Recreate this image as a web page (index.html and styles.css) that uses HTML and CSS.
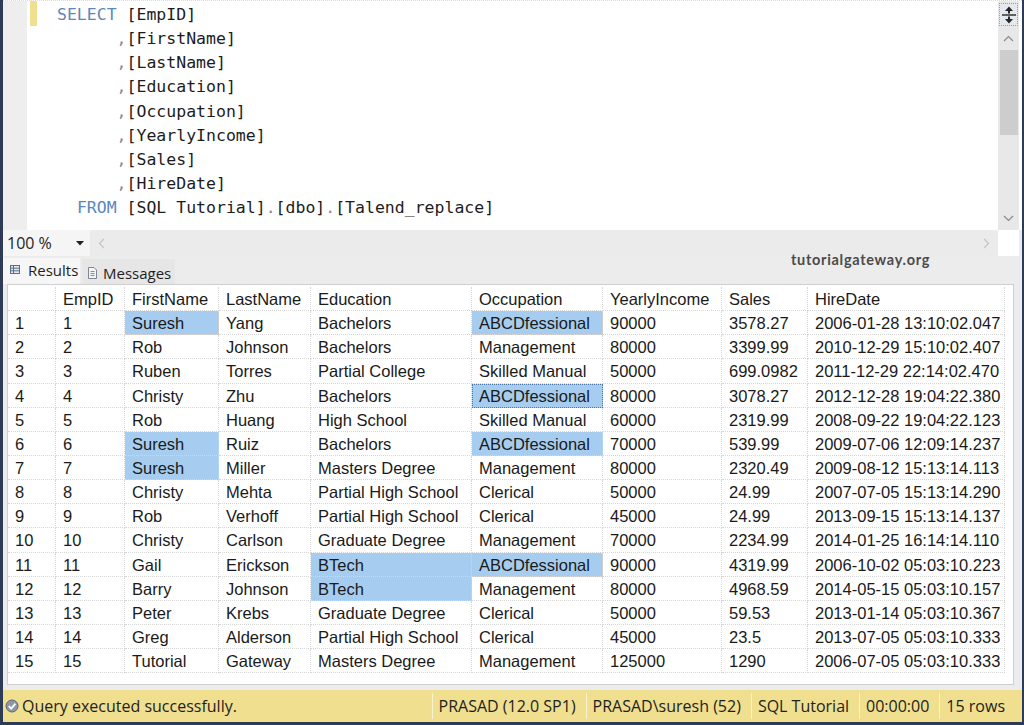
FILE: index.html
```html
<!DOCTYPE html>
<html>
<head>
<meta charset="utf-8">
<link rel="stylesheet" href="styles.css">
</head>
<body>
<div class="app">
  <div class="editor">
    <div class="gutter"></div>
    <div class="gap"></div>
    <div class="change"><div class="mark"></div></div>
    <div class="code">
      <div class="ln"><span class="kw">SELECT</span> [EmpID]</div>
      <div class="ln">      <span class="p">,</span>[FirstName]</div>
      <div class="ln">      <span class="p">,</span>[LastName]</div>
      <div class="ln">      <span class="p">,</span>[Education]</div>
      <div class="ln">      <span class="p">,</span>[Occupation]</div>
      <div class="ln">      <span class="p">,</span>[YearlyIncome]</div>
      <div class="ln">      <span class="p">,</span>[Sales]</div>
      <div class="ln">      <span class="p">,</span>[HireDate]</div>
      <div class="ln">  <span class="kw">FROM</span> [SQL Tutorial]<span class="p">.</span>[dbo]<span class="p">.</span>[Talend_replace]</div>
    </div>
    <div class="vscroll">
      <div class="split">
        <svg width="16" height="18" viewBox="0 0 16 18"><path d="M8 0.5 L4 5 H7 V7.6 H9 V5 H12Z M8 17.5 L4 13 H7 V10.4 H9 V13 H12Z" fill="#252525"/><rect x="1" y="8.3" width="14" height="1.4" fill="#252525"/></svg>
      </div>
      <div class="arrow"><svg width="11" height="7" viewBox="0 0 11 7"><path d="M1 6 L5.5 1.5 L10 6" stroke="#8a8a8a" fill="none" stroke-width="1.2"/></svg></div>
      <div class="thumb"></div>
      <div class="track"></div>
      <div class="arrow"><svg width="11" height="7" viewBox="0 0 11 7"><path d="M1 1 L5.5 5.5 L10 1" stroke="#8a8a8a" fill="none" stroke-width="1.2"/></svg></div>
    </div>
  </div>

  <div class="zoombar">
    <div class="zoom"><span>100 %</span><svg width="8" height="5" viewBox="0 0 8 5"><path d="M0 0 H8 L4 4.5Z" fill="#222"/></svg></div>
    <div class="hscroll">
      <svg width="7" height="11" viewBox="0 0 7 11"><path d="M6 1 L1.5 5.5 L6 10" stroke="#c4c4c4" fill="none" stroke-width="1.2"/></svg>
      <svg width="7" height="11" viewBox="0 0 7 11"><path d="M1 1 L5.5 5.5 L1 10" stroke="#c4c4c4" fill="none" stroke-width="1.2"/></svg>
    </div>
    <div class="corner"></div>
  </div>

  <div class="tabs">
    <div class="tab active">
      <svg width="10" height="9" viewBox="0 0 10 9"><rect x="0.5" y="0.5" width="9" height="8" fill="#e3e9f0" stroke="#5c6f86"/><path d="M0.5 3.2 H9.5 M0.5 5.8 H9.5 M3.5 0.5 V8.5" stroke="#5c6f86"/></svg>
      <span>Results</span>
    </div>
    <div class="tab">
      <svg width="11" height="12" viewBox="0 0 11 12"><path d="M1.5 0.5 H7 L9.5 3 V11.5 H1.5Z" fill="#f4f4f4" stroke="#7c8594"/><path d="M3.5 4.5 H7.5 M3.5 6.5 H7.5 M3.5 8.5 H7.5" stroke="#b08a3a"/></svg>
      <span>Messages</span>
    </div>
    <div class="watermark">tutorialgateway.org</div>
  </div>

  <div class="results">
    <div class="grid-wrap">
      <div class="grid">
        <div class="c"></div><div class="c">EmpID</div><div class="c">FirstName</div><div class="c">LastName</div><div class="c">Education</div><div class="c">Occupation</div><div class="c">YearlyIncome</div><div class="c">Sales</div><div class="c">HireDate</div>

        <div class="c">1</div><div class="c">1</div><div class="c sel">Suresh</div><div class="c">Yang</div><div class="c">Bachelors</div><div class="c sel">ABCDfessional</div><div class="c">90000</div><div class="c">3578.27</div><div class="c">2006-01-28 13:10:02.047</div>

        <div class="c">2</div><div class="c">2</div><div class="c">Rob</div><div class="c">Johnson</div><div class="c">Bachelors</div><div class="c">Management</div><div class="c">80000</div><div class="c">3399.99</div><div class="c">2010-12-29 15:10:02.407</div>

        <div class="c">3</div><div class="c">3</div><div class="c">Ruben</div><div class="c">Torres</div><div class="c">Partial College</div><div class="c">Skilled Manual</div><div class="c">50000</div><div class="c">699.0982</div><div class="c">2011-12-29 22:14:02.470</div>

        <div class="c">4</div><div class="c">4</div><div class="c">Christy</div><div class="c">Zhu</div><div class="c">Bachelors</div><div class="c sel focus">ABCDfessional</div><div class="c">80000</div><div class="c">3078.27</div><div class="c">2012-12-28 19:04:22.380</div>

        <div class="c">5</div><div class="c">5</div><div class="c">Rob</div><div class="c">Huang</div><div class="c">High School</div><div class="c">Skilled Manual</div><div class="c">60000</div><div class="c">2319.99</div><div class="c">2008-09-22 19:04:22.123</div>

        <div class="c">6</div><div class="c">6</div><div class="c sel">Suresh</div><div class="c">Ruiz</div><div class="c">Bachelors</div><div class="c sel">ABCDfessional</div><div class="c">70000</div><div class="c">539.99</div><div class="c">2009-07-06 12:09:14.237</div>

        <div class="c">7</div><div class="c">7</div><div class="c sel">Suresh</div><div class="c">Miller</div><div class="c">Masters Degree</div><div class="c">Management</div><div class="c">80000</div><div class="c">2320.49</div><div class="c">2009-08-12 15:13:14.113</div>

        <div class="c">8</div><div class="c">8</div><div class="c">Christy</div><div class="c">Mehta</div><div class="c">Partial High School</div><div class="c">Clerical</div><div class="c">50000</div><div class="c">24.99</div><div class="c">2007-07-05 15:13:14.290</div>

        <div class="c">9</div><div class="c">9</div><div class="c">Rob</div><div class="c">Verhoff</div><div class="c">Partial High School</div><div class="c">Clerical</div><div class="c">45000</div><div class="c">24.99</div><div class="c">2013-09-15 15:13:14.137</div>

        <div class="c">10</div><div class="c">10</div><div class="c">Christy</div><div class="c">Carlson</div><div class="c">Graduate Degree</div><div class="c">Management</div><div class="c">70000</div><div class="c">2234.99</div><div class="c">2014-01-25 16:14:14.110</div>

        <div class="c">11</div><div class="c">11</div><div class="c">Gail</div><div class="c">Erickson</div><div class="c sel">BTech</div><div class="c sel">ABCDfessional</div><div class="c">90000</div><div class="c">4319.99</div><div class="c">2006-10-02 05:03:10.223</div>

        <div class="c">12</div><div class="c">12</div><div class="c">Barry</div><div class="c">Johnson</div><div class="c sel">BTech</div><div class="c">Management</div><div class="c">80000</div><div class="c">4968.59</div><div class="c">2014-05-15 05:03:10.157</div>

        <div class="c">13</div><div class="c">13</div><div class="c">Peter</div><div class="c">Krebs</div><div class="c">Graduate Degree</div><div class="c">Clerical</div><div class="c">50000</div><div class="c">59.53</div><div class="c">2013-01-14 05:03:10.367</div>

        <div class="c">14</div><div class="c">14</div><div class="c">Greg</div><div class="c">Alderson</div><div class="c">Partial High School</div><div class="c">Clerical</div><div class="c">45000</div><div class="c">23.5</div><div class="c">2013-07-05 05:03:10.333</div>

        <div class="c">15</div><div class="c">15</div><div class="c">Tutorial</div><div class="c">Gateway</div><div class="c">Masters Degree</div><div class="c">Management</div><div class="c">125000</div><div class="c">1290</div><div class="c">2006-07-05 05:03:10.333</div>
      </div>
    </div>
  </div>

  <div class="status">
    <svg class="ok" width="14" height="14" viewBox="0 0 14 14"><circle cx="7" cy="7" r="6" fill="#8d97a6" stroke="#5d6675"/><path d="M3.8 7.2 L6.2 9.6 L10.4 4.6" stroke="#fff" stroke-width="1.8" fill="none"/></svg>
    <span class="msg">Query executed successfully.</span>
    <div class="info">
      <span class="item">PRASAD (12.0 SP1)</span>
      <span class="item">PRASAD\suresh (52)</span>
      <span class="item">SQL Tutorial</span>
      <span class="item">00:00:00</span>
      <span class="item">15 rows</span>
    </div>
  </div>
</div>
</body>
</html>
```

FILE: styles.css
```css
html, body {
  margin: 0;
  padding: 0;
}
body {
  width: 1024px;
  height: 725px;
  overflow: hidden;
  background: #2d3b57;
}
.app {
  margin-left: 3px;
  width: 1019px;
  height: 722px;
  display: flex;
  flex-direction: column;
  background: #ececec;
}

/* editor */
.editor {
  height: 230px;
  box-sizing: border-box;
  display: flex;
  background: #fff;
  border-top: 1px dotted #ecdfa0;
}
.gutter {
  width: 24px;
  background: #eeeeee;
}
.gap {
  width: 3px;
}
.change {
  width: 7px;
}
.mark {
  height: 25px;
  background: #efdf8e;
}
.code {
  flex: 1;
  margin: 0;
  padding: 2px 0 0 20px;
  font-family: "DejaVu Sans Mono", monospace;
  font-size: 16.5px;
  line-height: 24.15px;
  color: #1c1c1c;
}
.ln {
  white-space: pre;
  height: 24.15px;
}
.kw {
  color: #5a87bd;
}
.p {
  color: #8a8a8a;
}
.vscroll {
  width: 21px;
  margin-right: 3px;
  background: #e8e8e8;
  display: flex;
  flex-direction: column;
  align-items: center;
}
.split {
  margin-top: 2px;
  width: 19px;
  height: 23px;
  box-sizing: border-box;
  border: 1px dotted #7f9fc6;
  background: #e4e9ef;
  display: flex;
  align-items: center;
  justify-content: center;
}
.arrow {
  height: 24px;
  display: flex;
  align-items: center;
  justify-content: center;
}
.thumb {
  width: 18px;
  height: 85px;
  background: #cdcdcd;
}
.track {
  flex: 1;
}

/* zoom bar */
.zoombar {
  height: 26px;
  display: flex;
  background: #ebebeb;
}
.zoom {
  width: 87px;
  box-sizing: border-box;
  padding: 0 6px 0 4px;
  background: #f5f5f5;
  display: flex;
  align-items: center;
  justify-content: space-between;
  font-family: "Open Sans", sans-serif;
  font-size: 16px;
  color: #1e1e1e;
}
.hscroll {
  flex: 1;
  display: flex;
  align-items: center;
  justify-content: space-between;
  padding: 0 8px 0 8px;
}
.corner {
  width: 21px;
  margin-right: 3px;
  background: #fff;
}

/* tabs */
.tabs {
  position: relative;
  height: 28px;
  display: flex;
  align-items: flex-end;
  font-family: "Open Sans", sans-serif;
  font-size: 15px;
  color: #1e1e1e;
}
.tab {
  display: flex;
  align-items: center;
  gap: 9px;
  height: 23px;
  padding: 0 4px 0 5px;
  background: #e6e6e6;
}
.tab.active {
  height: 26px;
  width: 77px;
  box-sizing: border-box;
  padding: 0 0 3px 7px;
  gap: 8px;
  background: #f6f6f6;
  margin-right: 2px;
}
.tab:not(.active) {
  gap: 5px;
  padding-top: 2px;
}
.watermark {
  position: absolute;
  left: 788px;
  top: -5px;
  line-height: 18px;
  font-family: "Lato", sans-serif;
  font-weight: 700;
  font-size: 14.5px;
  letter-spacing: 0.7px;
  color: #4b4b4b;
}

/* results grid */
.results {
  height: 401px;
  padding: 0 8px 0 4px;
}
.grid-wrap {
  height: 100%;
  box-sizing: border-box;
  border: 1px solid #cfcfcf;
  background: #fff;
  padding-top: 2px;
}
.grid {
  display: grid;
  grid-template-columns: 48px 69px 94px 92px 161px 131px 119px 86px 197px;
  grid-auto-rows: 24.15px;
  font-family: "Liberation Sans", Arial, sans-serif;
  font-size: 16.5px;
  color: #1a1a1a;
}
.c {
  box-sizing: border-box;
  padding-left: 7px;
  border-right: 1px dotted #d6d6d6;
  border-bottom: 1px dotted #d6d6d6;
  line-height: 24px;
  white-space: nowrap;
  overflow: hidden;
}
.c.sel {
  background: #a6cdef;
}
.c.focus {
  outline: 1px dotted #4f76a3;
  outline-offset: -1px;
}

/* status bar */
.status {
  margin-top: 5px;
  height: 32px;
  display: flex;
  align-items: center;
  background: #efdf8f;
  font-family: "Open Sans", sans-serif;
  font-size: 16px;
  color: #1e1e1e;
  padding-right: 7px;
}
.ok {
  margin-left: 2px;
  margin-right: 3px;
}
.info {
  margin-left: auto;
  display: flex;
  height: 100%;
  align-items: center;
}
.item {
  padding: 0 10px 0 6px;
  border-left: 1px solid #f9f2cf;
  line-height: 26px;
}
```
